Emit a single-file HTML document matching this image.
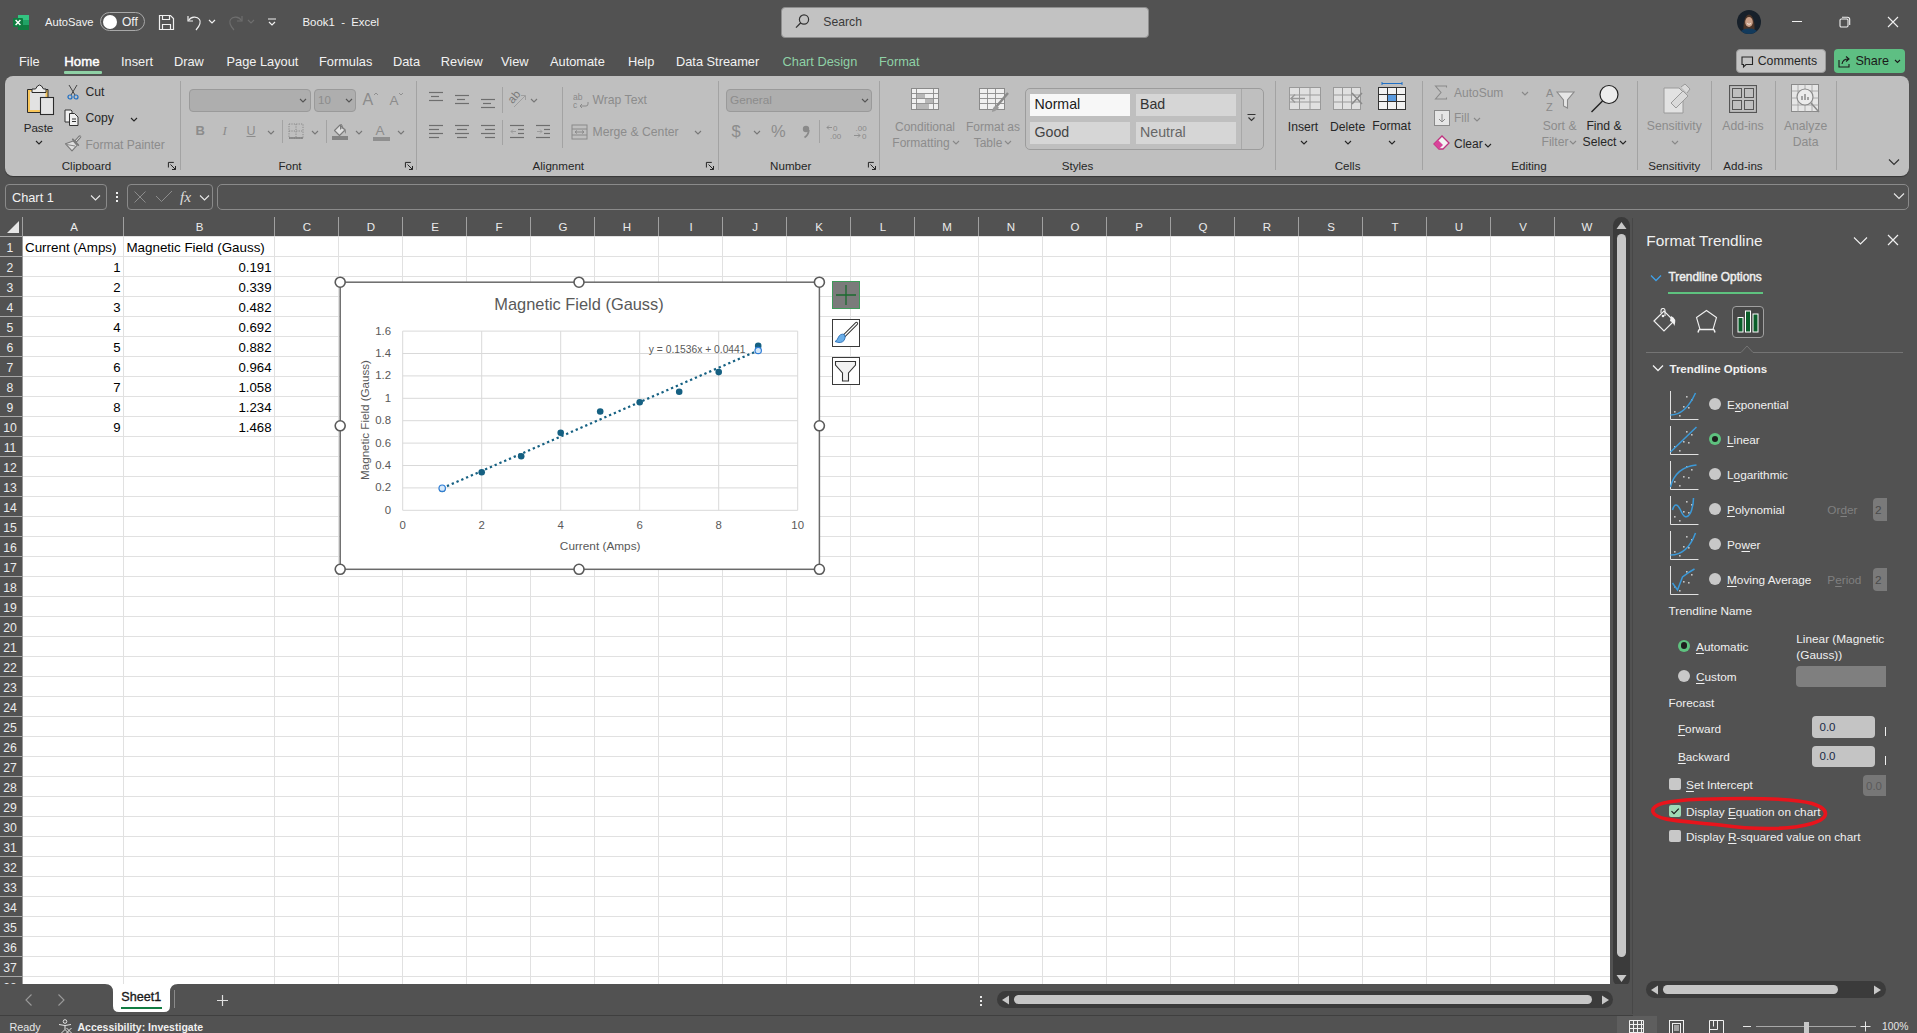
<!DOCTYPE html><html><head><meta charset="utf-8"><style>
*{margin:0;padding:0;box-sizing:border-box}
html,body{width:1917px;height:1033px;overflow:hidden}
body{background:#525252;font-family:"Liberation Sans",sans-serif;position:relative}
.a{position:absolute}
.t{position:absolute;white-space:nowrap}
u{text-decoration-thickness:1px;text-underline-offset:1.5px}
</style></head><body>
<svg class="a" style="left:13px;top:14px;" width="17" height="17" viewBox="0 0 17 17"><rect x="5" y="1" width="11" height="15" rx="1.5" fill="#21a366"/><rect x="5" y="1" width="11" height="5" fill="#33c481"/><rect x="5" y="11" width="11" height="5" fill="#107c41"/><rect x="0" y="4" width="10" height="9" rx="1" fill="#107c41"/><path d="M2.6 6 L7.4 11 M7.4 6 L2.6 11" stroke="#fff" stroke-width="1.4"/></svg>
<div class="t" style="font-size:11.2px;color:#f2f2f2;line-height:15px;top:14.5px;left:45.0px;">AutoSave</div>
<div class="a" style="left:100px;top:12px;width:45px;height:19px;border:1px solid #a8a8a8;border-radius:10px;"></div>
<div class="a" style="left:103px;top:14.5px;width:14px;height:14px;background:#fff;border-radius:50%;"></div>
<div class="t" style="font-size:12px;color:#f2f2f2;line-height:16px;top:14.0px;left:122.0px;">Off</div>
<svg class="a" style="left:158px;top:14px;" width="17" height="17" viewBox="0 0 17 17"><path d="M1.5 1.5h11l3 3v11h-14z" fill="none" stroke="#f0f0f0" stroke-width="1.2"/><path d="M4.5 1.5v4h7v-4 M4.5 15.5v-5h8v5" fill="none" stroke="#f0f0f0" stroke-width="1.2"/></svg>
<svg class="a" style="left:186px;top:13px;" width="18" height="18" viewBox="0 0 18 18"><path d="M2 3v5h5" fill="none" stroke="#f0f0f0" stroke-width="1.2"/><path d="M2.5 7.5 C5 3.5 11 3 13.5 6.5 C15.5 9.5 13.5 13 10 17" fill="none" stroke="#f0f0f0" stroke-width="1.2"/></svg>
<svg class="a" style="left:208px;top:19px;" width="8" height="5" viewBox="0 0 8 5"><path d="M1 1l3 3 3-3" fill="none" stroke="#f0f0f0" stroke-width="1.2"/></svg>
<svg class="a" style="left:226px;top:13px;" width="18" height="18" viewBox="0 0 18 18"><path d="M16 3v5h-5" fill="none" stroke="#6e6e6e" stroke-width="1.2"/><path d="M15.5 7.5 C13 3.5 7 3 4.5 6.5 C2.5 9.5 4.5 13 8 17" fill="none" stroke="#6e6e6e" stroke-width="1.2"/></svg>
<svg class="a" style="left:247px;top:19px;" width="8" height="5" viewBox="0 0 8 5"><path d="M1 1l3 3 3-3" fill="none" stroke="#6e6e6e" stroke-width="1.2"/></svg>
<svg class="a" style="left:267px;top:17px;" width="10" height="10" viewBox="0 0 10 10"><path d="M1 2h8 M2 5l3 3 3-3" fill="none" stroke="#f0f0f0" stroke-width="1.2"/></svg>
<div class="t" style="font-size:11.4px;color:#f2f2f2;line-height:15px;top:15.0px;left:302.5px;">Book1&nbsp; - &nbsp;Excel</div>
<div class="a" style="left:781px;top:6.5px;width:368px;height:31.5px;background:#c2c2c2;border:1px solid #8e8e8e;border-radius:4px;"></div>
<svg class="a" style="left:794px;top:13px;" width="17" height="17" viewBox="0 0 17 17"><circle cx="10" cy="6.5" r="4.6" fill="none" stroke="#333" stroke-width="1.2"/><path d="M6.8 9.8 L2 14.6" stroke="#333" stroke-width="1.3"/></svg>
<div class="t" style="font-size:12.2px;color:#3a3a3a;line-height:17px;top:13.8px;left:823.3px;">Search</div>
<svg class="a" style="left:1737px;top:10px;" width="24" height="24" viewBox="0 0 24 24"><defs><clipPath id="avc"><circle cx="12" cy="12" r="12"/></clipPath></defs><g clip-path="url(#avc)"><rect width="24" height="24" fill="#17202a"/><path d="M6.5 21 Q6 6 12 4.5 Q18 6 17.5 21z" fill="#4a3428"/><ellipse cx="12" cy="12" rx="3.8" ry="5" fill="#caa088"/><path d="M10 13.5 Q12 15.2 14 13.5" stroke="#f2e6dc" stroke-width="1" fill="none"/><path d="M1 26 Q3 18.5 12 18.5 Q21 18.5 23 26z" fill="#123a5c"/></g></svg>
<div class="a" style="left:1792px;top:21px;width:10px;height:1.2px;background:#f0f0f0;"></div>
<svg class="a" style="left:1839px;top:16px;" width="12" height="12" viewBox="0 0 12 12"><rect x="1" y="3" width="8" height="8" rx="1.2" fill="none" stroke="#f0f0f0" stroke-width="1.1"/><path d="M3 1.2h5.5a2.2 2.2 0 0 1 2.2 2.2V9" fill="none" stroke="#f0f0f0" stroke-width="1.1"/></svg>
<svg class="a" style="left:1887px;top:16px;" width="12" height="12" viewBox="0 0 12 12"><path d="M1 1L11 11M11 1L1 11" stroke="#f0f0f0" stroke-width="1.1"/></svg>
<div class="t" style="font-size:12.8px;color:#f2f2f2;line-height:17px;top:53.1px;left:19.0px;">File</div>
<div class="t" style="font-size:13.2px;color:#ffffff;line-height:18px;top:52.6px;left:64.3px;-webkit-text-stroke:0.45px #fff;">Home</div>
<div class="t" style="font-size:12.8px;color:#f2f2f2;line-height:17px;top:53.1px;left:121.0px;">Insert</div>
<div class="t" style="font-size:12.8px;color:#f2f2f2;line-height:17px;top:53.1px;left:174.0px;">Draw</div>
<div class="t" style="font-size:12.8px;color:#f2f2f2;line-height:17px;top:53.1px;left:226.5px;">Page Layout</div>
<div class="t" style="font-size:12.8px;color:#f2f2f2;line-height:17px;top:53.1px;left:319.0px;">Formulas</div>
<div class="t" style="font-size:12.8px;color:#f2f2f2;line-height:17px;top:53.1px;left:393.0px;">Data</div>
<div class="t" style="font-size:12.8px;color:#f2f2f2;line-height:17px;top:53.1px;left:440.8px;">Review</div>
<div class="t" style="font-size:12.8px;color:#f2f2f2;line-height:17px;top:53.1px;left:501.0px;">View</div>
<div class="t" style="font-size:12.8px;color:#f2f2f2;line-height:17px;top:53.1px;left:550.0px;">Automate</div>
<div class="t" style="font-size:12.8px;color:#f2f2f2;line-height:17px;top:53.1px;left:628.0px;">Help</div>
<div class="t" style="font-size:12.8px;color:#f2f2f2;line-height:17px;top:53.1px;left:676.0px;">Data Streamer</div>
<div class="t" style="font-size:12.8px;color:#8fd1a6;line-height:17px;top:53.1px;left:782.6px;">Chart Design</div>
<div class="t" style="font-size:12.8px;color:#8fd1a6;line-height:17px;top:53.1px;left:879.0px;">Format</div>
<div class="a" style="left:64px;top:71px;width:37.5px;height:2.5px;background:#8fd1a6;border-radius:1px;"></div>
<div class="a" style="left:1736px;top:49px;width:89.5px;height:23.5px;background:#c4c4c4;border:1px solid #9c9c9c;border-radius:4px;"></div>
<svg class="a" style="left:1741px;top:56px;" width="13" height="13" viewBox="0 0 13 13"><path d="M1 1h10.5v7.5H5L2.5 11V8.5H1z" fill="none" stroke="#262626" stroke-width="1.1"/></svg>
<div class="t" style="font-size:12.3px;color:#262626;line-height:17px;top:53.0px;left:1757.7px;">Comments</div>
<div class="a" style="left:1834px;top:49px;width:71px;height:23.5px;background:#5ebf83;border-radius:4px;"></div>
<svg class="a" style="left:1838px;top:55px;" width="13" height="13" viewBox="0 0 13 13"><path d="M1 5v7h10V9" fill="none" stroke="#1a1a1a" stroke-width="1.1"/><path d="M4 9 Q5 4 10 4 M8 1.5l3 2.5-3 2.5" fill="none" stroke="#1a1a1a" stroke-width="1.1"/></svg>
<div class="t" style="font-size:12.6px;color:#1a1a1a;line-height:17px;top:53.0px;left:1855.4px;">Share</div>
<svg class="a" style="left:1894px;top:59px;" width="7" height="5" viewBox="0 0 7 5"><path d="M1 1l2.5 2.5L6 1" fill="none" stroke="#1a1a1a" stroke-width="1.1"/></svg>
<div class="a" style="left:5px;top:184px;width:102px;height:26px;border:1px solid #8a8a8a;border-radius:4px;"></div>
<div class="t" style="font-size:12.8px;color:#f2f2f2;line-height:17px;top:188.9px;left:11.9px;">Chart 1</div>
<svg class="a" style="left:90px;top:193.5px;" width="11" height="8" viewBox="0 0 11 8"><path d="M1 1.5l4.5 4.5 4.5-4.5" fill="none" stroke="#e8e8e8" stroke-width="1.1"/></svg>
<div class="a" style="left:116px;top:191.8px;width:2.2px;height:2.2px;background:#f0f0f0;"></div>
<div class="a" style="left:116px;top:196px;width:2.2px;height:2.2px;background:#f0f0f0;"></div>
<div class="a" style="left:116px;top:200.2px;width:2.2px;height:2.2px;background:#f0f0f0;"></div>
<div class="a" style="left:127px;top:184px;width:86px;height:26px;border:1px solid #8a8a8a;border-radius:4px;"></div>
<svg class="a" style="left:133px;top:190px;" width="14" height="14" viewBox="0 0 14 14"><path d="M1.5 1.5L12.5 12.5M12.5 1.5L1.5 12.5" stroke="#8c8c8c" stroke-width="1"/></svg>
<svg class="a" style="left:155px;top:190px;" width="18" height="13" viewBox="0 0 18 13"><path d="M1 6l5.5 5.5L17 1" fill="none" stroke="#8c8c8c" stroke-width="1"/></svg>
<div class="t" style="font-size:15.5px;color:#dcdcdc;line-height:21px;top:186.0px;left:180.0px;font-family:Liberation Serif,serif;font-style:italic;">fx</div>
<svg class="a" style="left:199px;top:193.5px;" width="11" height="8" viewBox="0 0 11 8"><path d="M1 1.5l4.5 4.5 4.5-4.5" fill="none" stroke="#e8e8e8" stroke-width="1.1"/></svg>
<div class="a" style="left:217px;top:184px;width:1692px;height:26px;border:1px solid #8a8a8a;border-radius:5px;"></div>
<svg class="a" style="left:1893px;top:191.5px;" width="12" height="8" viewBox="0 0 12 8"><path d="M1 1.5l5 5 5-5" fill="none" stroke="#e8e8e8" stroke-width="1.1"/></svg>
<div class="a" style="left:0px;top:217px;width:1611px;height:19px;background:#525252;"></div>
<svg class="a" style="left:6px;top:220px;" width="14" height="14" viewBox="0 0 14 14"><path d="M13 1V13H1z" fill="#e6e6e6"/></svg>
<div class="a" style="left:22px;top:217px;width:1px;height:19px;background:#a0a0a0;"></div>
<div class="t" style="font-size:11.5px;color:#ececec;line-height:16px;top:218.5px;left:-226.0px;width:600px;text-align:center;">A</div>
<div class="a" style="left:122.5px;top:217px;width:1px;height:19px;background:#a0a0a0;"></div>
<div class="t" style="font-size:11.5px;color:#ececec;line-height:16px;top:218.5px;left:-100.5px;width:600px;text-align:center;">B</div>
<div class="a" style="left:273.5px;top:217px;width:1px;height:19px;background:#a0a0a0;"></div>
<div class="t" style="font-size:11.5px;color:#ececec;line-height:16px;top:218.5px;left:7.0px;width:600px;text-align:center;">C</div>
<div class="a" style="left:337.5px;top:217px;width:1px;height:19px;background:#a0a0a0;"></div>
<div class="t" style="font-size:11.5px;color:#ececec;line-height:16px;top:218.5px;left:71.0px;width:600px;text-align:center;">D</div>
<div class="a" style="left:401.5px;top:217px;width:1px;height:19px;background:#a0a0a0;"></div>
<div class="t" style="font-size:11.5px;color:#ececec;line-height:16px;top:218.5px;left:135.0px;width:600px;text-align:center;">E</div>
<div class="a" style="left:465.5px;top:217px;width:1px;height:19px;background:#a0a0a0;"></div>
<div class="t" style="font-size:11.5px;color:#ececec;line-height:16px;top:218.5px;left:199.0px;width:600px;text-align:center;">F</div>
<div class="a" style="left:529.5px;top:217px;width:1px;height:19px;background:#a0a0a0;"></div>
<div class="t" style="font-size:11.5px;color:#ececec;line-height:16px;top:218.5px;left:263.0px;width:600px;text-align:center;">G</div>
<div class="a" style="left:593.5px;top:217px;width:1px;height:19px;background:#a0a0a0;"></div>
<div class="t" style="font-size:11.5px;color:#ececec;line-height:16px;top:218.5px;left:327.0px;width:600px;text-align:center;">H</div>
<div class="a" style="left:657.5px;top:217px;width:1px;height:19px;background:#a0a0a0;"></div>
<div class="t" style="font-size:11.5px;color:#ececec;line-height:16px;top:218.5px;left:391.0px;width:600px;text-align:center;">I</div>
<div class="a" style="left:721.5px;top:217px;width:1px;height:19px;background:#a0a0a0;"></div>
<div class="t" style="font-size:11.5px;color:#ececec;line-height:16px;top:218.5px;left:455.0px;width:600px;text-align:center;">J</div>
<div class="a" style="left:785.5px;top:217px;width:1px;height:19px;background:#a0a0a0;"></div>
<div class="t" style="font-size:11.5px;color:#ececec;line-height:16px;top:218.5px;left:519.0px;width:600px;text-align:center;">K</div>
<div class="a" style="left:849.5px;top:217px;width:1px;height:19px;background:#a0a0a0;"></div>
<div class="t" style="font-size:11.5px;color:#ececec;line-height:16px;top:218.5px;left:583.0px;width:600px;text-align:center;">L</div>
<div class="a" style="left:913.5px;top:217px;width:1px;height:19px;background:#a0a0a0;"></div>
<div class="t" style="font-size:11.5px;color:#ececec;line-height:16px;top:218.5px;left:647.0px;width:600px;text-align:center;">M</div>
<div class="a" style="left:977.5px;top:217px;width:1px;height:19px;background:#a0a0a0;"></div>
<div class="t" style="font-size:11.5px;color:#ececec;line-height:16px;top:218.5px;left:711.0px;width:600px;text-align:center;">N</div>
<div class="a" style="left:1041.5px;top:217px;width:1px;height:19px;background:#a0a0a0;"></div>
<div class="t" style="font-size:11.5px;color:#ececec;line-height:16px;top:218.5px;left:775.0px;width:600px;text-align:center;">O</div>
<div class="a" style="left:1105.5px;top:217px;width:1px;height:19px;background:#a0a0a0;"></div>
<div class="t" style="font-size:11.5px;color:#ececec;line-height:16px;top:218.5px;left:839.0px;width:600px;text-align:center;">P</div>
<div class="a" style="left:1169.5px;top:217px;width:1px;height:19px;background:#a0a0a0;"></div>
<div class="t" style="font-size:11.5px;color:#ececec;line-height:16px;top:218.5px;left:903.0px;width:600px;text-align:center;">Q</div>
<div class="a" style="left:1233.5px;top:217px;width:1px;height:19px;background:#a0a0a0;"></div>
<div class="t" style="font-size:11.5px;color:#ececec;line-height:16px;top:218.5px;left:967.0px;width:600px;text-align:center;">R</div>
<div class="a" style="left:1297.5px;top:217px;width:1px;height:19px;background:#a0a0a0;"></div>
<div class="t" style="font-size:11.5px;color:#ececec;line-height:16px;top:218.5px;left:1031.0px;width:600px;text-align:center;">S</div>
<div class="a" style="left:1361.5px;top:217px;width:1px;height:19px;background:#a0a0a0;"></div>
<div class="t" style="font-size:11.5px;color:#ececec;line-height:16px;top:218.5px;left:1095.0px;width:600px;text-align:center;">T</div>
<div class="a" style="left:1425.5px;top:217px;width:1px;height:19px;background:#a0a0a0;"></div>
<div class="t" style="font-size:11.5px;color:#ececec;line-height:16px;top:218.5px;left:1159.0px;width:600px;text-align:center;">U</div>
<div class="a" style="left:1489.5px;top:217px;width:1px;height:19px;background:#a0a0a0;"></div>
<div class="t" style="font-size:11.5px;color:#ececec;line-height:16px;top:218.5px;left:1223.0px;width:600px;text-align:center;">V</div>
<div class="a" style="left:1553.5px;top:217px;width:1px;height:19px;background:#a0a0a0;"></div>
<div class="t" style="font-size:11.5px;color:#ececec;line-height:16px;top:218.5px;left:1287.0px;width:600px;text-align:center;">W</div>
<div class="a" style="left:23px;top:236px;width:1587px;height:748px;background-color:#fff;background-image:linear-gradient(to bottom,transparent 0 19px,#e1e1e1 19px 20px);background-size:100% 20px;background-position:0 1px"></div>
<div class="a" style="left:275px;top:236px;width:1335px;height:748px;background-image:linear-gradient(to right,transparent 0 63px,#e1e1e1 63px 64px);background-size:64px 100%;"></div>
<div class="a" style="left:123px;top:236px;width:1px;height:748px;background:#e1e1e1;"></div>
<div class="a" style="left:274px;top:236px;width:1px;height:748px;background:#e1e1e1;"></div>
<div class="a" style="left:0px;top:236px;width:22px;height:748px;background:#525252;"></div>
<div class="a" style="left:22px;top:236px;width:1px;height:748px;background:#9a9a9a;"></div>
<div class="a" style="left:0px;top:236px;width:22px;height:1px;background:#a8a8a8;"></div>
<div class="a" style="left:0px;top:256px;width:22px;height:1px;background:#a8a8a8;"></div>
<div class="t" style="font-size:12.2px;color:#ececec;line-height:17px;top:239.5px;left:-290.0px;width:600px;text-align:center;">1</div>
<div class="a" style="left:0px;top:276px;width:22px;height:1px;background:#a8a8a8;"></div>
<div class="t" style="font-size:12.2px;color:#ececec;line-height:17px;top:259.5px;left:-290.0px;width:600px;text-align:center;">2</div>
<div class="a" style="left:0px;top:296px;width:22px;height:1px;background:#a8a8a8;"></div>
<div class="t" style="font-size:12.2px;color:#ececec;line-height:17px;top:279.5px;left:-290.0px;width:600px;text-align:center;">3</div>
<div class="a" style="left:0px;top:316px;width:22px;height:1px;background:#a8a8a8;"></div>
<div class="t" style="font-size:12.2px;color:#ececec;line-height:17px;top:299.5px;left:-290.0px;width:600px;text-align:center;">4</div>
<div class="a" style="left:0px;top:336px;width:22px;height:1px;background:#a8a8a8;"></div>
<div class="t" style="font-size:12.2px;color:#ececec;line-height:17px;top:319.5px;left:-290.0px;width:600px;text-align:center;">5</div>
<div class="a" style="left:0px;top:356px;width:22px;height:1px;background:#a8a8a8;"></div>
<div class="t" style="font-size:12.2px;color:#ececec;line-height:17px;top:339.5px;left:-290.0px;width:600px;text-align:center;">6</div>
<div class="a" style="left:0px;top:376px;width:22px;height:1px;background:#a8a8a8;"></div>
<div class="t" style="font-size:12.2px;color:#ececec;line-height:17px;top:359.5px;left:-290.0px;width:600px;text-align:center;">7</div>
<div class="a" style="left:0px;top:396px;width:22px;height:1px;background:#a8a8a8;"></div>
<div class="t" style="font-size:12.2px;color:#ececec;line-height:17px;top:379.5px;left:-290.0px;width:600px;text-align:center;">8</div>
<div class="a" style="left:0px;top:416px;width:22px;height:1px;background:#a8a8a8;"></div>
<div class="t" style="font-size:12.2px;color:#ececec;line-height:17px;top:399.5px;left:-290.0px;width:600px;text-align:center;">9</div>
<div class="a" style="left:0px;top:436px;width:22px;height:1px;background:#a8a8a8;"></div>
<div class="t" style="font-size:12.2px;color:#ececec;line-height:17px;top:419.5px;left:-290.0px;width:600px;text-align:center;">10</div>
<div class="a" style="left:0px;top:456px;width:22px;height:1px;background:#a8a8a8;"></div>
<div class="t" style="font-size:12.2px;color:#ececec;line-height:17px;top:439.5px;left:-290.0px;width:600px;text-align:center;">11</div>
<div class="a" style="left:0px;top:476px;width:22px;height:1px;background:#a8a8a8;"></div>
<div class="t" style="font-size:12.2px;color:#ececec;line-height:17px;top:459.5px;left:-290.0px;width:600px;text-align:center;">12</div>
<div class="a" style="left:0px;top:496px;width:22px;height:1px;background:#a8a8a8;"></div>
<div class="t" style="font-size:12.2px;color:#ececec;line-height:17px;top:479.5px;left:-290.0px;width:600px;text-align:center;">13</div>
<div class="a" style="left:0px;top:516px;width:22px;height:1px;background:#a8a8a8;"></div>
<div class="t" style="font-size:12.2px;color:#ececec;line-height:17px;top:499.5px;left:-290.0px;width:600px;text-align:center;">14</div>
<div class="a" style="left:0px;top:536px;width:22px;height:1px;background:#a8a8a8;"></div>
<div class="t" style="font-size:12.2px;color:#ececec;line-height:17px;top:519.5px;left:-290.0px;width:600px;text-align:center;">15</div>
<div class="a" style="left:0px;top:556px;width:22px;height:1px;background:#a8a8a8;"></div>
<div class="t" style="font-size:12.2px;color:#ececec;line-height:17px;top:539.5px;left:-290.0px;width:600px;text-align:center;">16</div>
<div class="a" style="left:0px;top:576px;width:22px;height:1px;background:#a8a8a8;"></div>
<div class="t" style="font-size:12.2px;color:#ececec;line-height:17px;top:559.5px;left:-290.0px;width:600px;text-align:center;">17</div>
<div class="a" style="left:0px;top:596px;width:22px;height:1px;background:#a8a8a8;"></div>
<div class="t" style="font-size:12.2px;color:#ececec;line-height:17px;top:579.5px;left:-290.0px;width:600px;text-align:center;">18</div>
<div class="a" style="left:0px;top:616px;width:22px;height:1px;background:#a8a8a8;"></div>
<div class="t" style="font-size:12.2px;color:#ececec;line-height:17px;top:599.5px;left:-290.0px;width:600px;text-align:center;">19</div>
<div class="a" style="left:0px;top:636px;width:22px;height:1px;background:#a8a8a8;"></div>
<div class="t" style="font-size:12.2px;color:#ececec;line-height:17px;top:619.5px;left:-290.0px;width:600px;text-align:center;">20</div>
<div class="a" style="left:0px;top:656px;width:22px;height:1px;background:#a8a8a8;"></div>
<div class="t" style="font-size:12.2px;color:#ececec;line-height:17px;top:639.5px;left:-290.0px;width:600px;text-align:center;">21</div>
<div class="a" style="left:0px;top:676px;width:22px;height:1px;background:#a8a8a8;"></div>
<div class="t" style="font-size:12.2px;color:#ececec;line-height:17px;top:659.5px;left:-290.0px;width:600px;text-align:center;">22</div>
<div class="a" style="left:0px;top:696px;width:22px;height:1px;background:#a8a8a8;"></div>
<div class="t" style="font-size:12.2px;color:#ececec;line-height:17px;top:679.5px;left:-290.0px;width:600px;text-align:center;">23</div>
<div class="a" style="left:0px;top:716px;width:22px;height:1px;background:#a8a8a8;"></div>
<div class="t" style="font-size:12.2px;color:#ececec;line-height:17px;top:699.5px;left:-290.0px;width:600px;text-align:center;">24</div>
<div class="a" style="left:0px;top:736px;width:22px;height:1px;background:#a8a8a8;"></div>
<div class="t" style="font-size:12.2px;color:#ececec;line-height:17px;top:719.5px;left:-290.0px;width:600px;text-align:center;">25</div>
<div class="a" style="left:0px;top:756px;width:22px;height:1px;background:#a8a8a8;"></div>
<div class="t" style="font-size:12.2px;color:#ececec;line-height:17px;top:739.5px;left:-290.0px;width:600px;text-align:center;">26</div>
<div class="a" style="left:0px;top:776px;width:22px;height:1px;background:#a8a8a8;"></div>
<div class="t" style="font-size:12.2px;color:#ececec;line-height:17px;top:759.5px;left:-290.0px;width:600px;text-align:center;">27</div>
<div class="a" style="left:0px;top:796px;width:22px;height:1px;background:#a8a8a8;"></div>
<div class="t" style="font-size:12.2px;color:#ececec;line-height:17px;top:779.5px;left:-290.0px;width:600px;text-align:center;">28</div>
<div class="a" style="left:0px;top:816px;width:22px;height:1px;background:#a8a8a8;"></div>
<div class="t" style="font-size:12.2px;color:#ececec;line-height:17px;top:799.5px;left:-290.0px;width:600px;text-align:center;">29</div>
<div class="a" style="left:0px;top:836px;width:22px;height:1px;background:#a8a8a8;"></div>
<div class="t" style="font-size:12.2px;color:#ececec;line-height:17px;top:819.5px;left:-290.0px;width:600px;text-align:center;">30</div>
<div class="a" style="left:0px;top:856px;width:22px;height:1px;background:#a8a8a8;"></div>
<div class="t" style="font-size:12.2px;color:#ececec;line-height:17px;top:839.5px;left:-290.0px;width:600px;text-align:center;">31</div>
<div class="a" style="left:0px;top:876px;width:22px;height:1px;background:#a8a8a8;"></div>
<div class="t" style="font-size:12.2px;color:#ececec;line-height:17px;top:859.5px;left:-290.0px;width:600px;text-align:center;">32</div>
<div class="a" style="left:0px;top:896px;width:22px;height:1px;background:#a8a8a8;"></div>
<div class="t" style="font-size:12.2px;color:#ececec;line-height:17px;top:879.5px;left:-290.0px;width:600px;text-align:center;">33</div>
<div class="a" style="left:0px;top:916px;width:22px;height:1px;background:#a8a8a8;"></div>
<div class="t" style="font-size:12.2px;color:#ececec;line-height:17px;top:899.5px;left:-290.0px;width:600px;text-align:center;">34</div>
<div class="a" style="left:0px;top:936px;width:22px;height:1px;background:#a8a8a8;"></div>
<div class="t" style="font-size:12.2px;color:#ececec;line-height:17px;top:919.5px;left:-290.0px;width:600px;text-align:center;">35</div>
<div class="a" style="left:0px;top:956px;width:22px;height:1px;background:#a8a8a8;"></div>
<div class="t" style="font-size:12.2px;color:#ececec;line-height:17px;top:939.5px;left:-290.0px;width:600px;text-align:center;">36</div>
<div class="a" style="left:0px;top:976px;width:22px;height:1px;background:#a8a8a8;"></div>
<div class="t" style="font-size:12.2px;color:#ececec;line-height:17px;top:959.5px;left:-290.0px;width:600px;text-align:center;">37</div>
<div class="t" style="font-size:12.2px;color:#ececec;line-height:17px;top:979.5px;left:-290.0px;width:600px;text-align:center;">38</div>
<div class="t" style="font-size:13.4px;color:#000;line-height:18px;top:238.5px;left:25.0px;">Current (Amps)</div>
<div class="t" style="font-size:13.4px;color:#000;line-height:18px;top:238.5px;left:126.4px;">Magnetic Field (Gauss)</div>
<div class="t" style="font-size:13.2px;color:#000;line-height:18px;top:258.5px;left:-479.5px;width:600px;text-align:right;">1</div>
<div class="t" style="font-size:13.2px;color:#000;line-height:18px;top:258.5px;left:-328.5px;width:600px;text-align:right;">0.191</div>
<div class="t" style="font-size:13.2px;color:#000;line-height:18px;top:278.5px;left:-479.5px;width:600px;text-align:right;">2</div>
<div class="t" style="font-size:13.2px;color:#000;line-height:18px;top:278.5px;left:-328.5px;width:600px;text-align:right;">0.339</div>
<div class="t" style="font-size:13.2px;color:#000;line-height:18px;top:298.5px;left:-479.5px;width:600px;text-align:right;">3</div>
<div class="t" style="font-size:13.2px;color:#000;line-height:18px;top:298.5px;left:-328.5px;width:600px;text-align:right;">0.482</div>
<div class="t" style="font-size:13.2px;color:#000;line-height:18px;top:318.5px;left:-479.5px;width:600px;text-align:right;">4</div>
<div class="t" style="font-size:13.2px;color:#000;line-height:18px;top:318.5px;left:-328.5px;width:600px;text-align:right;">0.692</div>
<div class="t" style="font-size:13.2px;color:#000;line-height:18px;top:338.5px;left:-479.5px;width:600px;text-align:right;">5</div>
<div class="t" style="font-size:13.2px;color:#000;line-height:18px;top:338.5px;left:-328.5px;width:600px;text-align:right;">0.882</div>
<div class="t" style="font-size:13.2px;color:#000;line-height:18px;top:358.5px;left:-479.5px;width:600px;text-align:right;">6</div>
<div class="t" style="font-size:13.2px;color:#000;line-height:18px;top:358.5px;left:-328.5px;width:600px;text-align:right;">0.964</div>
<div class="t" style="font-size:13.2px;color:#000;line-height:18px;top:378.5px;left:-479.5px;width:600px;text-align:right;">7</div>
<div class="t" style="font-size:13.2px;color:#000;line-height:18px;top:378.5px;left:-328.5px;width:600px;text-align:right;">1.058</div>
<div class="t" style="font-size:13.2px;color:#000;line-height:18px;top:398.5px;left:-479.5px;width:600px;text-align:right;">8</div>
<div class="t" style="font-size:13.2px;color:#000;line-height:18px;top:398.5px;left:-328.5px;width:600px;text-align:right;">1.234</div>
<div class="t" style="font-size:13.2px;color:#000;line-height:18px;top:418.5px;left:-479.5px;width:600px;text-align:right;">9</div>
<div class="t" style="font-size:13.2px;color:#000;line-height:18px;top:418.5px;left:-328.5px;width:600px;text-align:right;">1.468</div>
<div class="a" style="left:1610px;top:211px;width:22px;height:805px;background:#525252;"></div>
<div class="a" style="left:1613px;top:217px;width:17px;height:770px;background:#3b3b3b;border-radius:8.5px;"></div>
<svg class="a" style="left:1616px;top:221px;" width="11" height="9" viewBox="0 0 11 9"><path d="M5.5 1L10.5 8H0.5z" fill="#c8c8c8"/></svg>
<div class="a" style="left:1617px;top:234px;width:9px;height:723px;background:#c6c6c6;border-radius:4.5px;"></div>
<svg class="a" style="left:1616px;top:974px;" width="11" height="9" viewBox="0 0 11 9"><path d="M5.5 8L10.5 1H0.5z" fill="#c8c8c8"/></svg>
<div class="a" style="left:1632px;top:218px;width:1px;height:796px;background:#474747;"></div>
<div class="a" style="left:0px;top:984px;width:1632px;height:31px;background:#525252;"></div>
<svg class="a" style="left:24px;top:993px;" width="9" height="14" viewBox="0 0 9 14"><path d="M7.5 1.5L2 7l5.5 5.5" fill="none" stroke="#9a9a9a" stroke-width="1.1"/></svg>
<svg class="a" style="left:57px;top:993px;" width="9" height="14" viewBox="0 0 9 14"><path d="M1.5 1.5L7 7l-5.5 5.5" fill="none" stroke="#9a9a9a" stroke-width="1.1"/></svg>
<svg class="a" style="left:105px;top:984px;" width="73" height="28" viewBox="0 0 73 28"><path d="M0 0 H73 Q65 0 65 8 V22 Q65 28 59 28 H14 Q8 28 8 22 V8 Q8 0 0 0z" fill="#fff"/></svg>
<div class="t" style="font-size:12.6px;color:#1a1a1a;line-height:17px;top:988.7px;left:121.3px;-webkit-text-stroke:0.35px #1a1a1a;">Sheet1</div>
<div class="a" style="left:121px;top:1007px;width:41px;height:2px;background:#107c41;"></div>
<div class="a" style="left:174px;top:990px;width:1px;height:18px;background:#8a8a8a;"></div>
<svg class="a" style="left:216px;top:994px;" width="13" height="13" viewBox="0 0 13 13"><path d="M6.5 1v11M1 6.5h11" stroke="#e0e0e0" stroke-width="1.2"/></svg>
<div class="a" style="left:980px;top:996px;width:2px;height:2px;background:#e8e8e8;"></div>
<div class="a" style="left:980px;top:1000px;width:2px;height:2px;background:#e8e8e8;"></div>
<div class="a" style="left:980px;top:1004px;width:2px;height:2px;background:#e8e8e8;"></div>
<div class="a" style="left:997px;top:991px;width:616px;height:17px;background:#3b3b3b;border-radius:8.5px;"></div>
<svg class="a" style="left:1001px;top:995px;" width="9" height="10" viewBox="0 0 9 10"><path d="M1 5L8 0.5V9.5z" fill="#c8c8c8"/></svg>
<div class="a" style="left:1014px;top:995px;width:578px;height:9px;background:#c6c6c6;border-radius:4.5px;"></div>
<svg class="a" style="left:1601px;top:995px;" width="9" height="10" viewBox="0 0 9 10"><path d="M8 5L1 0.5V9.5z" fill="#c8c8c8"/></svg>
<div class="a" style="left:0px;top:1015px;width:1917px;height:1px;background:#3f3f3f;"></div>
<div class="a" style="left:0px;top:1016px;width:1917px;height:17px;background:#525252;"></div>
<div class="t" style="font-size:10.8px;color:#e6e6e6;line-height:15px;top:1019.5px;left:9.4px;">Ready</div>
<svg class="a" style="left:58px;top:1019px;" width="15" height="14" viewBox="0 0 15 14"><circle cx="7" cy="2.5" r="1.8" fill="none" stroke="#e6e6e6" stroke-width="1"/><path d="M1 5.5Q7 7.5 13 5.5M7 6.5v4M7 10.5l-3.5 3.5M7 10.5l3.5 3.5M8.5 9l5 5M13.5 9l-5 5" fill="none" stroke="#e6e6e6" stroke-width="1"/></svg>
<div class="t" style="font-size:10.5px;color:#f0f0f0;line-height:14px;top:1020.0px;font-weight:bold;left:77.5px;">Accessibility: Investigate</div>
<div class="a" style="left:1617px;top:1016px;width:40px;height:17px;background:#5e5e5e;"></div>
<svg class="a" style="left:1629px;top:1020px;" width="15" height="13" viewBox="0 0 15 13"><path d="M0.5 0.5h14v13M0.5 0.5v13M0.5 4.5h14M0.5 8.5h14M0.5 12.5h14M4.5 0.5v13M8.5 0.5v13M12.5 0.5v13" fill="none" stroke="#f0f0f0" stroke-width="1"/></svg>
<svg class="a" style="left:1669px;top:1020px;" width="15" height="13" viewBox="0 0 15 13"><rect x="0.5" y="0.5" width="14" height="13" fill="none" stroke="#f0f0f0"/><rect x="3.5" y="3.5" width="8" height="10" fill="none" stroke="#f0f0f0"/><path d="M5 6h5M5 8h5M5 10h5" stroke="#f0f0f0"/></svg>
<svg class="a" style="left:1709px;top:1020px;" width="15" height="13" viewBox="0 0 15 13"><path d="M0.5 13V0.5h14V13M0.5 9.5h8V0.5M4.5 0.5v6" fill="none" stroke="#f0f0f0"/></svg>
<div class="a" style="left:1743px;top:1026px;width:8px;height:1px;background:#e6e6e6;"></div>
<div class="a" style="left:1756px;top:1026px;width:100px;height:1px;background:#a8a8a8;"></div>
<div class="a" style="left:1804px;top:1022px;width:5px;height:11px;background:#c8c8c8;"></div>
<svg class="a" style="left:1860px;top:1021px;" width="11" height="11" viewBox="0 0 11 11"><path d="M5.5 0.5v10M0.5 5.5h10" stroke="#e6e6e6" stroke-width="1"/></svg>
<div class="t" style="font-size:10.3px;color:#e6e6e6;line-height:14px;top:1019.6px;left:1882.0px;">100%</div>
<div class="a" style="left:5px;top:76px;width:1904px;height:100px;background:#bfbfbf;border-radius:8px;box-shadow:0 1px 1px rgba(0,0,0,0.35);"></div>
<svg class="a" style="left:20px;top:80px;" width="40" height="40" viewBox="20 80 40 40"><path d="M27.5 89.5h20.5v23H27.5z" fill="#f8c65a" stroke="#2b2b2b" stroke-width="1"/><rect x="30" y="91.5" width="15.5" height="18.5" fill="#e2e2e2"/><path d="M32 92.5V89h3.5Q37.5 85 39.5 85Q41.5 85 43.5 89H46v3.5z" fill="#ececec" stroke="#2b2b2b" stroke-width="1"/><rect x="40.5" y="97.5" width="13" height="17" fill="#e4e4e4" stroke="#2b2b2b" stroke-width="1.1"/></svg>
<div class="t" style="font-size:11.6px;color:#262626;line-height:16px;top:120.0px;left:-261.5px;width:600px;text-align:center;">Paste</div>
<svg class="a" style="left:35.0px;top:140px;" width="8" height="5" viewBox="0 0 8 5"><path d="M1 1l3 3 3-3" fill="none" stroke="#262626" stroke-width="1.1"/></svg>
<svg class="a" style="left:66px;top:84px;" width="14" height="16" viewBox="0 0 14 16"><path d="M3 1L9 11M11 1L5 11" stroke="#444" stroke-width="1"/><circle cx="4" cy="13" r="2" fill="none" stroke="#1f6fc4" stroke-width="1.2"/><circle cx="10" cy="13" r="2" fill="none" stroke="#1f6fc4" stroke-width="1.2"/></svg>
<div class="t" style="font-size:12.2px;color:#262626;line-height:17px;top:84.1px;left:85.4px;">Cut</div>
<svg class="a" style="left:64px;top:109px;" width="18" height="17" viewBox="0 0 18 17"><path d="M1 1h6l1 1v11H1z" fill="#f0f0f0" stroke="#333" stroke-width="1"/><path d="M5.5 4.5h5l3.5 3.5v8.5H5.5z" fill="#f0f0f0" stroke="#333" stroke-width="1"/><path d="M8 10h4M8 12.5h4" stroke="#333" stroke-width="1"/></svg>
<div class="t" style="font-size:12.2px;color:#262626;line-height:17px;top:110.1px;left:85.4px;">Copy</div>
<svg class="a" style="left:130.1px;top:116.5px;" width="8" height="5" viewBox="0 0 8 5"><path d="M1 1l3 3 3-3" fill="none" stroke="#262626" stroke-width="1.1"/></svg>
<svg class="a" style="left:60px;top:130px;" width="30" height="25" viewBox="60 130 30 25"><path d="M73.2 141L65.5 143.8 72 150.8 77 145.3z" fill="#dedede" stroke="#7a7a7a" stroke-width="1.1" stroke-linejoin="round"/><path d="M66.5 144.5L75 146" stroke="#7a7a7a" stroke-width="0.9"/><path d="M79.8 136.8L75.8 141.2" stroke="#7a7a7a" stroke-width="3" stroke-linecap="round"/><path d="M79.8 136.8L75.8 141.2" stroke="#e2e2e2" stroke-width="1" stroke-linecap="round"/><path d="M72.8 139.3L78.3 145" stroke="#7a7a7a" stroke-width="1.8" stroke-linecap="round"/></svg>
<div class="t" style="font-size:12px;color:#8c8c8c;line-height:16px;top:137.0px;left:85.4px;">Format Painter</div>
<div class="t" style="font-size:11.6px;color:#262626;line-height:16px;top:158.0px;left:-213.5px;width:600px;text-align:center;">Clipboard</div>
<svg class="a" style="left:167px;top:161px;" width="10" height="10" viewBox="0 0 10 10"><path d="M1.4 6.5V1.4H6.8" fill="none" stroke="#262626" stroke-width="1"/><path d="M3.5 3.5L8.5 8.5M8.5 5V8.5H5" fill="none" stroke="#262626" stroke-width="1"/></svg>
<div class="a" style="left:179.5px;top:81px;width:1px;height:89px;background:#a3a3a3;"></div>
<div class="a" style="left:188.5px;top:88.5px;width:122px;height:23px;background:#aeaeae;border:1px solid #9a9a9a;border-radius:4px;"></div>
<svg class="a" style="left:298.5px;top:98px;" width="8" height="5" viewBox="0 0 8 5"><path d="M1 1l3 3 3-3" fill="none" stroke="#555" stroke-width="1.1"/></svg>
<div class="a" style="left:314px;top:88.5px;width:41.5px;height:23px;background:#aeaeae;border:1px solid #9a9a9a;border-radius:4px;"></div>
<div class="t" style="font-size:11.5px;color:#8c8c8c;line-height:16px;top:92.0px;left:318.0px;">10</div>
<svg class="a" style="left:345.0px;top:98px;" width="8" height="5" viewBox="0 0 8 5"><path d="M1 1l3 3 3-3" fill="none" stroke="#555" stroke-width="1.1"/></svg>
<div class="t" style="font-size:16px;color:#8c8c8c;line-height:22px;top:88.5px;left:362.5px;">A</div>
<svg class="a" style="left:373px;top:92px;" width="6" height="4" viewBox="0 0 6 4"><path d="M1 3l2-2 2 2" fill="none" stroke="#8a8a8a" stroke-width="0.9"/></svg>
<div class="t" style="font-size:13.5px;color:#8c8c8c;line-height:18px;top:91.5px;left:389.5px;">A</div>
<svg class="a" style="left:398px;top:92px;" width="6" height="4" viewBox="0 0 6 4"><path d="M1 1l2 2 2-2" fill="none" stroke="#8a8a8a" stroke-width="0.9"/></svg>
<div class="t" style="font-size:13px;color:#8c8c8c;line-height:18px;top:122.3px;font-weight:bold;left:195.5px;">B</div>
<div class="t" style="font-size:13px;color:#8c8c8c;line-height:18px;top:122.3px;left:222.5px;font-style:italic;font-family:Liberation Serif,serif;">I</div>
<div class="t" style="font-size:12.5px;color:#8c8c8c;line-height:17px;top:122.5px;left:246.5px;text-decoration:underline;">U</div>
<svg class="a" style="left:267.1px;top:129.5px;" width="8" height="5" viewBox="0 0 8 5"><path d="M1 1l3 3 3-3" fill="none" stroke="#777" stroke-width="1.1"/></svg>
<div class="a" style="left:281.5px;top:120px;width:1px;height:23px;background:#a3a3a3;"></div>
<svg class="a" style="left:288px;top:123px;" width="16" height="16" viewBox="0 0 16 16"><rect x="1" y="1" width="14" height="14" fill="none" stroke="#8a8a8a" stroke-width="1" stroke-dasharray="1.2 1.2"/><path d="M8 1v14M1 8h14" stroke="#8a8a8a" stroke-dasharray="1.2 1.2"/><path d="M1 15h14" stroke="#7a7a7a" stroke-width="1.4"/></svg>
<svg class="a" style="left:310.9px;top:129.5px;" width="8" height="5" viewBox="0 0 8 5"><path d="M1 1l3 3 3-3" fill="none" stroke="#777" stroke-width="1.1"/></svg>
<div class="a" style="left:325.8px;top:120px;width:1px;height:23px;background:#a3a3a3;"></div>
<svg class="a" style="left:328px;top:118px;" width="24" height="24" viewBox="328 118 24 24"><path d="M334.5 130.5L340 125 345 130 339.5 135.5z" fill="#dedede" stroke="#7a7a7a" stroke-width="1.1" stroke-linejoin="round"/><path d="M340.5 129.5V125.5Q340.5 124 341.5 124.5Q342.5 125 342 129" fill="none" stroke="#7a7a7a" stroke-width="1"/><path d="M344.5 128Q347 131 345.5 134Q344 131 344.5 128z" fill="#8a8a8a"/><rect x="332" y="136" width="16" height="4" fill="#838383"/></svg>
<svg class="a" style="left:355.2px;top:129.5px;" width="8" height="5" viewBox="0 0 8 5"><path d="M1 1l3 3 3-3" fill="none" stroke="#777" stroke-width="1.1"/></svg>
<div class="t" style="font-size:13.5px;color:#8c8c8c;line-height:18px;top:121.5px;left:375.5px;">A</div>
<div class="a" style="left:372.5px;top:137px;width:17px;height:3.5px;background:#8f8f8f;"></div>
<svg class="a" style="left:396.5px;top:129.5px;" width="8" height="5" viewBox="0 0 8 5"><path d="M1 1l3 3 3-3" fill="none" stroke="#777" stroke-width="1.1"/></svg>
<svg class="a" style="left:404px;top:161px;" width="10" height="10" viewBox="0 0 10 10"><path d="M1.4 6.5V1.4H6.8" fill="none" stroke="#262626" stroke-width="1"/><path d="M3.5 3.5L8.5 8.5M8.5 5V8.5H5" fill="none" stroke="#262626" stroke-width="1"/></svg>
<div class="t" style="font-size:11.6px;color:#262626;line-height:16px;top:158.0px;left:-10.0px;width:600px;text-align:center;">Font</div>
<div class="a" style="left:415.5px;top:81px;width:1px;height:89px;background:#a3a3a3;"></div>
<svg class="a" style="left:420px;top:84px;" width="140" height="66" viewBox="420 84 140 66"><path d="M429 92.5H443" stroke="#6e6e6e" stroke-width="1.2"/><path d="M431 96.5H439" stroke="#6e6e6e" stroke-width="1.2"/><path d="M429 100.5H443" stroke="#6e6e6e" stroke-width="1.2"/><path d="M455 95.5H469" stroke="#6e6e6e" stroke-width="1.2"/><path d="M457 99.5H465" stroke="#6e6e6e" stroke-width="1.2"/><path d="M455 103.5H469" stroke="#6e6e6e" stroke-width="1.2"/><path d="M481 99.5H495" stroke="#6e6e6e" stroke-width="1.2"/><path d="M483 103.5H491" stroke="#6e6e6e" stroke-width="1.2"/><path d="M481 107.5H495" stroke="#6e6e6e" stroke-width="1.2"/><path d="M429 125.5H443" stroke="#6e6e6e" stroke-width="1.2"/><path d="M429 129.5H439" stroke="#6e6e6e" stroke-width="1.2"/><path d="M429 133.5H443" stroke="#6e6e6e" stroke-width="1.2"/><path d="M429 137.5H439" stroke="#6e6e6e" stroke-width="1.2"/><path d="M455 125.5H469" stroke="#6e6e6e" stroke-width="1.2"/><path d="M457 129.5H467" stroke="#6e6e6e" stroke-width="1.2"/><path d="M455 133.5H469" stroke="#6e6e6e" stroke-width="1.2"/><path d="M457 137.5H467" stroke="#6e6e6e" stroke-width="1.2"/><path d="M481 125.5H495" stroke="#6e6e6e" stroke-width="1.2"/><path d="M485 129.5H495" stroke="#6e6e6e" stroke-width="1.2"/><path d="M481 133.5H495" stroke="#6e6e6e" stroke-width="1.2"/><path d="M485 137.5H495" stroke="#6e6e6e" stroke-width="1.2"/><path d="M510 125.5H524" stroke="#6e6e6e" stroke-width="1.2"/><path d="M518 129.5H524" stroke="#6e6e6e" stroke-width="1.2"/><path d="M518 133.5H524" stroke="#6e6e6e" stroke-width="1.2"/><path d="M510 137.5H524" stroke="#6e6e6e" stroke-width="1.2"/><path d="M536 125.5H550" stroke="#6e6e6e" stroke-width="1.2"/><path d="M544 129.5H550" stroke="#6e6e6e" stroke-width="1.2"/><path d="M544 133.5H550" stroke="#6e6e6e" stroke-width="1.2"/><path d="M536 137.5H550" stroke="#6e6e6e" stroke-width="1.2"/><path d="M511 131.5h5M513 129.5l-2 2 2 2" fill="none" stroke="#9c9c9c" stroke-width="1"/><path d="M537 131.5h5M540 129.5l2 2-2 2" fill="none" stroke="#9c9c9c" stroke-width="1"/></svg>
<div class="a" style="left:502.4px;top:87px;width:1px;height:26px;background:#a3a3a3;"></div>
<svg class="a" style="left:502px;top:88px;" width="26" height="26" viewBox="0 0 26 26"><text x="13" y="15" text-anchor="middle" font-size="11.5" fill="#7a7a7a" font-family="Liberation Sans" transform="rotate(-50 10 11)">ab</text></svg>
<svg class="a" style="left:504px;top:83px;" width="26" height="26" viewBox="0 0 26 26"><path d="M10 24L21 13M17 12.5h4.5V17" fill="none" stroke="#9a9a9a" stroke-width="0.9"/></svg>
<svg class="a" style="left:529.5px;top:98px;" width="8" height="5" viewBox="0 0 8 5"><path d="M1 1l3 3 3-3" fill="none" stroke="#777" stroke-width="1.1"/></svg>
<div class="a" style="left:502.4px;top:120px;width:1px;height:25px;background:#a3a3a3;"></div>
<div class="a" style="left:561.5px;top:87px;width:1px;height:61px;background:#a3a3a3;"></div>
<svg class="a" style="left:573px;top:92px;" width="17" height="18" viewBox="0 0 17 18"><text x="0" y="8" font-size="8.5" fill="#8a8a8a" font-family="Liberation Sans">ab</text><text x="0" y="16" font-size="8.5" fill="#8a8a8a" font-family="Liberation Sans">c</text><path d="M15 10v2a2 2 0 0 1-2 2H7M9 12l-2 2 2 2" fill="none" stroke="#8a8a8a" stroke-width="1"/></svg>
<div class="t" style="font-size:12.2px;color:#8c8c8c;line-height:17px;top:92.1px;left:592.5px;">Wrap Text</div>
<svg class="a" style="left:571px;top:124px;" width="17" height="16" viewBox="0 0 17 16"><rect x="1" y="1" width="15" height="14" fill="none" stroke="#8a8a8a" stroke-width="1"/><path d="M1 5h15M1 11h15M4 8h9M6 6.5L4 8l2 1.5M11 6.5L13 8l-2 1.5" fill="none" stroke="#8a8a8a" stroke-width="1"/></svg>
<div class="t" style="font-size:12.2px;color:#8c8c8c;line-height:17px;top:123.5px;left:592.6px;">Merge &amp; Center</div>
<svg class="a" style="left:693.8px;top:129.5px;" width="8" height="5" viewBox="0 0 8 5"><path d="M1 1l3 3 3-3" fill="none" stroke="#777" stroke-width="1.1"/></svg>
<div class="t" style="font-size:11.6px;color:#262626;line-height:16px;top:158.0px;left:258.3px;width:600px;text-align:center;">Alignment</div>
<svg class="a" style="left:705px;top:161px;" width="10" height="10" viewBox="0 0 10 10"><path d="M1.4 6.5V1.4H6.8" fill="none" stroke="#262626" stroke-width="1"/><path d="M3.5 3.5L8.5 8.5M8.5 5V8.5H5" fill="none" stroke="#262626" stroke-width="1"/></svg>
<div class="a" style="left:717.7px;top:81px;width:1px;height:89px;background:#a3a3a3;"></div>
<div class="a" style="left:726px;top:88.5px;width:145.5px;height:23px;background:#aeaeae;border:1px solid #9a9a9a;border-radius:4px;"></div>
<div class="t" style="font-size:11.8px;color:#8c8c8c;line-height:16px;top:92.0px;left:730.0px;">General</div>
<svg class="a" style="left:861.0px;top:98px;" width="8" height="5" viewBox="0 0 8 5"><path d="M1 1l3 3 3-3" fill="none" stroke="#555" stroke-width="1.1"/></svg>
<div class="t" style="font-size:16.5px;color:#8c8c8c;line-height:23px;top:120.0px;left:731.5px;">$</div>
<svg class="a" style="left:752.9px;top:129.5px;" width="8" height="5" viewBox="0 0 8 5"><path d="M1 1l3 3 3-3" fill="none" stroke="#777" stroke-width="1.1"/></svg>
<div class="t" style="font-size:16.5px;color:#8c8c8c;line-height:23px;top:120.0px;left:771.0px;">%</div>
<svg class="a" style="left:801px;top:124px;" width="10" height="15" viewBox="0 0 10 15"><circle cx="5" cy="5" r="3.2" fill="#8a8a8a"/><path d="M7.8 6 Q7.5 11 3.5 13.5" fill="none" stroke="#8a8a8a" stroke-width="1.8"/></svg>
<div class="a" style="left:819.4px;top:120px;width:1px;height:23px;background:#a3a3a3;"></div>
<svg class="a" style="left:826px;top:123px;" width="17" height="17" viewBox="0 0 17 17"><text x="7" y="8" font-size="8" fill="#8a8a8a" font-family="Liberation Sans">0</text><text x="4" y="16" font-size="8" fill="#8a8a8a" font-family="Liberation Sans">.00</text><path d="M1 4.5h5M3 2.5L1 4.5 3 6.5" fill="none" stroke="#8a8a8a" stroke-width="0.9"/></svg>
<svg class="a" style="left:853px;top:123px;" width="17" height="17" viewBox="0 0 17 17"><text x="2.5" y="8" font-size="8" fill="#8a8a8a" font-family="Liberation Sans">.00</text><text x="9" y="16" font-size="8" fill="#8a8a8a" font-family="Liberation Sans">0</text><path d="M1 12.5h6M5 10.5l2 2-2 2" fill="none" stroke="#8a8a8a" stroke-width="0.9"/></svg>
<div class="t" style="font-size:11.6px;color:#262626;line-height:16px;top:158.0px;left:490.7px;width:600px;text-align:center;">Number</div>
<svg class="a" style="left:866.5px;top:161px;" width="10" height="10" viewBox="0 0 10 10"><path d="M1.4 6.5V1.4H6.8" fill="none" stroke="#262626" stroke-width="1"/><path d="M3.5 3.5L8.5 8.5M8.5 5V8.5H5" fill="none" stroke="#262626" stroke-width="1"/></svg>
<div class="a" style="left:879.4px;top:81px;width:1px;height:89px;background:#a3a3a3;"></div>
<svg class="a" style="left:911px;top:88px;" width="28" height="22" viewBox="0 0 28 22"><rect x="0.5" y="0.5" width="27" height="21" fill="#f0f0f0" stroke="#8a8a8a"/><path d="M0.5 5.5h27" stroke="#8a8a8a" stroke-width="0.9"/><path d="M0.5 10.5h27" stroke="#8a8a8a" stroke-width="0.9"/><path d="M0.5 15.5h27" stroke="#8a8a8a" stroke-width="0.9"/><path d="M5.5 0.5v21" stroke="#8a8a8a" stroke-width="0.9"/><path d="M22.5 0.5v21" stroke="#8a8a8a" stroke-width="0.9"/><rect x="6" y="6" width="8" height="4" fill="#b8b8b8"/><rect x="14" y="11" width="8" height="4" fill="#b8b8b8"/><rect x="6" y="16" width="12" height="5" fill="#b8b8b8"/></svg>
<div class="t" style="font-size:12px;color:#8c8c8c;line-height:16px;top:118.6px;left:625.0px;width:600px;text-align:center;">Conditional</div>
<div class="t" style="font-size:12px;color:#8c8c8c;line-height:16px;top:134.8px;left:621.0px;width:600px;text-align:center;">Formatting</div>
<svg class="a" style="left:952.0px;top:140px;" width="8" height="5" viewBox="0 0 8 5"><path d="M1 1l3 3 3-3" fill="none" stroke="#888" stroke-width="1.1"/></svg>
<svg class="a" style="left:979px;top:88px;" width="31" height="26" viewBox="0 0 31 26"><rect x="0.5" y="0.5" width="25" height="21" fill="#f0f0f0" stroke="#8a8a8a"/><path d="M0.5 5.5h25" stroke="#8a8a8a" stroke-width="0.9"/><path d="M0.5 10.5h25" stroke="#8a8a8a" stroke-width="0.9"/><path d="M0.5 15.5h25" stroke="#8a8a8a" stroke-width="0.9"/><path d="M8.5 0.5v21" stroke="#8a8a8a" stroke-width="0.9"/><path d="M16.5 0.5v21" stroke="#8a8a8a" stroke-width="0.9"/><path d="M29 5 L17 19" stroke="#8a8a8a" stroke-width="2.5"/><path d="M18 17 Q13 19 13 24 Q17 23 20 20z" fill="#9a9a9a"/></svg>
<div class="t" style="font-size:12px;color:#8c8c8c;line-height:16px;top:118.6px;left:693.0px;width:600px;text-align:center;">Format as</div>
<div class="t" style="font-size:12px;color:#8c8c8c;line-height:16px;top:134.8px;left:688.0px;width:600px;text-align:center;">Table</div>
<svg class="a" style="left:1004.0px;top:140px;" width="8" height="5" viewBox="0 0 8 5"><path d="M1 1l3 3 3-3" fill="none" stroke="#888" stroke-width="1.1"/></svg>
<div class="a" style="left:1025px;top:88px;width:239px;height:62px;border:1px solid #9c9c9c;border-radius:5px;"></div>
<div class="a" style="left:1240.5px;top:89px;width:1px;height:60px;background:#a8a8a8;"></div>
<div class="a" style="left:1030px;top:94px;width:100px;height:22px;background:#f7f7f7;"></div>
<div class="a" style="left:1135.8px;top:94px;width:100.5px;height:22px;background:#d6d6d6;"></div>
<div class="a" style="left:1030px;top:122px;width:100px;height:21.5px;background:#d6d6d6;"></div>
<div class="a" style="left:1135.8px;top:122px;width:100.5px;height:21.5px;background:#d6d6d6;"></div>
<div class="t" style="font-size:14.2px;color:#1a1a1a;line-height:19px;top:95.0px;left:1034.5px;">Normal</div>
<div class="t" style="font-size:14.2px;color:#333;line-height:19px;top:95.0px;left:1140.0px;">Bad</div>
<div class="t" style="font-size:14.2px;color:#444;line-height:19px;top:123.0px;left:1034.5px;">Good</div>
<div class="t" style="font-size:14.2px;color:#666;line-height:19px;top:123.0px;left:1140.0px;">Neutral</div>
<svg class="a" style="left:1246px;top:113px;" width="11" height="10" viewBox="0 0 11 10"><path d="M1.5 1.5h8M2.5 4.5l3 3 3-3" fill="none" stroke="#333" stroke-width="1.1"/></svg>
<div class="t" style="font-size:11.6px;color:#262626;line-height:16px;top:158.0px;left:777.5px;width:600px;text-align:center;">Styles</div>
<div class="a" style="left:1275px;top:81px;width:1px;height:89px;background:#a3a3a3;"></div>
<svg class="a" style="left:1288.5px;top:87px;" width="32" height="23" viewBox="0 0 32 23"><rect x="0.5" y="0.5" width="31" height="22" fill="#e0e0e0" stroke="#9a9a9a"/><path d="M0.5 8h31M0.5 15h31M10.5 0.5v22M21 0.5v22" stroke="#9a9a9a"/><path d="M2 11.5h14M6 7.5l-4 4 4 4" fill="none" stroke="#9a9a9a" stroke-width="1.5"/></svg>
<div class="t" style="font-size:12.2px;color:#262626;line-height:17px;top:119.2px;left:1003.0px;width:600px;text-align:center;">Insert</div>
<svg class="a" style="left:1299.5px;top:140px;" width="8" height="5" viewBox="0 0 8 5"><path d="M1 1l3 3 3-3" fill="none" stroke="#262626" stroke-width="1.1"/></svg>
<svg class="a" style="left:1333px;top:87px;" width="31" height="23" viewBox="0 0 31 23"><rect x="0.5" y="0.5" width="27" height="22" fill="#e0e0e0" stroke="#9a9a9a"/><path d="M0.5 8h27M0.5 15h27M9.5 0.5v22M18.5 0.5v22" stroke="#9a9a9a"/><path d="M19 6L29 17M29 6L19 17" stroke="#8a8a8a" stroke-width="1.5"/></svg>
<div class="t" style="font-size:12.2px;color:#262626;line-height:17px;top:119.2px;left:1047.6px;width:600px;text-align:center;">Delete</div>
<svg class="a" style="left:1344.1px;top:140px;" width="8" height="5" viewBox="0 0 8 5"><path d="M1 1l3 3 3-3" fill="none" stroke="#262626" stroke-width="1.1"/></svg>
<svg class="a" style="left:1378px;top:82px;" width="28" height="28" viewBox="0 0 28 28"><path d="M4 1.5h20M4 0v3M24 0v3" stroke="#1f6fc4" stroke-width="1"/><rect x="0.5" y="5.5" width="27" height="22" fill="#f2f2f2" stroke="#333"/><rect x="9.5" y="12.5" width="9" height="7" fill="#5a9be0"/><path d="M0.5 12.5h27M0.5 19.5h27M9.5 5.5v22M18.5 5.5v22" stroke="#333"/><rect x="0.5" y="5.5" width="27" height="22" fill="none" stroke="#333"/></svg>
<div class="t" style="font-size:12.2px;color:#262626;line-height:17px;top:118.4px;left:1091.5px;width:600px;text-align:center;">Format</div>
<svg class="a" style="left:1388.0px;top:140px;" width="8" height="5" viewBox="0 0 8 5"><path d="M1 1l3 3 3-3" fill="none" stroke="#262626" stroke-width="1.1"/></svg>
<div class="t" style="font-size:11.6px;color:#262626;line-height:16px;top:158.0px;left:1047.6px;width:600px;text-align:center;">Cells</div>
<div class="a" style="left:1421.9px;top:81px;width:1px;height:89px;background:#a3a3a3;"></div>
<svg class="a" style="left:1434px;top:85px;" width="14" height="15" viewBox="0 0 14 15"><path d="M12.5 2.5V1H1.5l5.5 6.5-5.5 6.5h11v-1.5" fill="none" stroke="#8a8a8a" stroke-width="1.1"/></svg>
<div class="t" style="font-size:12px;color:#8c8c8c;line-height:16px;top:85.0px;left:1454.0px;">AutoSum</div>
<svg class="a" style="left:1521.3px;top:90.5px;" width="8" height="5" viewBox="0 0 8 5"><path d="M1 1l3 3 3-3" fill="none" stroke="#888" stroke-width="1.1"/></svg>
<svg class="a" style="left:1434px;top:110px;" width="16" height="16" viewBox="0 0 16 16"><rect x="0.5" y="0.5" width="15" height="15" fill="#e6e6e6" stroke="#8a8a8a"/><path d="M8 4v8M5 9l3 3 3-3" fill="none" stroke="#8a8a8a" stroke-width="1"/></svg>
<div class="t" style="font-size:12px;color:#8c8c8c;line-height:16px;top:110.0px;left:1454.0px;">Fill</div>
<svg class="a" style="left:1472.5px;top:116.5px;" width="8" height="5" viewBox="0 0 8 5"><path d="M1 1l3 3 3-3" fill="none" stroke="#888" stroke-width="1.1"/></svg>
<svg class="a" style="left:1433px;top:135px;" width="17" height="15" viewBox="0 0 17 15"><path d="M1 9L9 1l7 7-6 6H6z" fill="#f2f2f2" stroke="#c0317f" stroke-width="1.3"/><path d="M1 9l5 5 4-4-5-5z" fill="#d8449a"/></svg>
<div class="t" style="font-size:12px;color:#262626;line-height:16px;top:136.0px;left:1454.0px;">Clear</div>
<svg class="a" style="left:1484.2px;top:142.5px;" width="8" height="5" viewBox="0 0 8 5"><path d="M1 1l3 3 3-3" fill="none" stroke="#262626" stroke-width="1.1"/></svg>
<svg class="a" style="left:1545px;top:86px;" width="30" height="27" viewBox="0 0 30 27"><text x="1" y="11" font-size="11" fill="#8a8a8a" font-family="Liberation Sans">A</text><text x="1" y="25" font-size="11" fill="#8a8a8a" font-family="Liberation Sans">Z</text><path d="M12 6h17l-6.5 8v8l-4-2v-6z" fill="#e6e6e6" stroke="#8a8a8a" stroke-width="1.1"/></svg>
<div class="t" style="font-size:12.2px;color:#8c8c8c;line-height:17px;top:118.4px;left:1259.6px;width:600px;text-align:center;">Sort &amp;</div>
<div class="t" style="font-size:12.2px;color:#8c8c8c;line-height:17px;top:134.3px;left:1255.0px;width:600px;text-align:center;">Filter</div>
<svg class="a" style="left:1568.5px;top:140px;" width="8" height="5" viewBox="0 0 8 5"><path d="M1 1l3 3 3-3" fill="none" stroke="#888" stroke-width="1.1"/></svg>
<svg class="a" style="left:1590px;top:84px;" width="30" height="30" viewBox="0 0 30 30"><circle cx="19" cy="10.5" r="9" fill="#ececec" stroke="#222" stroke-width="1.2"/><path d="M12.5 17L1.5 28" stroke="#222" stroke-width="1.4"/></svg>
<div class="t" style="font-size:12.2px;color:#262626;line-height:17px;top:118.4px;left:1304.0px;width:600px;text-align:center;">Find &amp;</div>
<div class="t" style="font-size:12.2px;color:#262626;line-height:17px;top:134.3px;left:1299.5px;width:600px;text-align:center;">Select</div>
<svg class="a" style="left:1618.5px;top:140px;" width="8" height="5" viewBox="0 0 8 5"><path d="M1 1l3 3 3-3" fill="none" stroke="#262626" stroke-width="1.1"/></svg>
<div class="t" style="font-size:11.6px;color:#262626;line-height:16px;top:158.0px;left:1229.0px;width:600px;text-align:center;">Editing</div>
<div class="a" style="left:1637px;top:81px;width:1px;height:89px;background:#a3a3a3;"></div>
<svg class="a" style="left:1663px;top:83px;" width="28" height="31" viewBox="0 0 28 31"><path d="M1 5h15l4 4v21H1z" fill="#e2e2e2" stroke="#9a9a9a"/><path d="M8 20L20 8l5 5-12 12z" fill="#dadada" stroke="#9a9a9a"/><path d="M18 4l4-3 5 5-3 4" fill="#dadada" stroke="#9a9a9a"/></svg>
<div class="t" style="font-size:12.2px;color:#8c8c8c;line-height:17px;top:118.4px;left:1374.3px;width:600px;text-align:center;">Sensitivity</div>
<svg class="a" style="left:1670.8px;top:140px;" width="8" height="5" viewBox="0 0 8 5"><path d="M1 1l3 3 3-3" fill="none" stroke="#888" stroke-width="1.1"/></svg>
<div class="t" style="font-size:11.6px;color:#262626;line-height:16px;top:158.0px;left:1374.3px;width:600px;text-align:center;">Sensitivity</div>
<div class="a" style="left:1711.4px;top:81px;width:1px;height:89px;background:#a3a3a3;"></div>
<svg class="a" style="left:1729px;top:85px;" width="28" height="28" viewBox="0 0 28 28"><rect x="0.5" y="0.5" width="27" height="27" fill="none" stroke="#555" stroke-width="1.2"/><rect x="3.5" y="3.5" width="9" height="9" fill="none" stroke="#555" stroke-width="1"/><rect x="15.5" y="3.5" width="9" height="9" fill="none" stroke="#555" stroke-width="1"/><rect x="3.5" y="15.5" width="9" height="9" fill="none" stroke="#555" stroke-width="1"/><rect x="15.5" y="15.5" width="9" height="9" fill="none" stroke="#555" stroke-width="1"/></svg>
<div class="t" style="font-size:12.2px;color:#8c8c8c;line-height:17px;top:118.4px;left:1443.0px;width:600px;text-align:center;">Add-ins</div>
<div class="t" style="font-size:11.6px;color:#262626;line-height:16px;top:158.0px;left:1443.0px;width:600px;text-align:center;">Add-ins</div>
<div class="a" style="left:1774.5px;top:81px;width:1px;height:89px;background:#a3a3a3;"></div>
<svg class="a" style="left:1791px;top:84px;" width="30" height="30" viewBox="0 0 30 30"><rect x="0.5" y="0.5" width="27" height="27" fill="#e6e6e6" stroke="#8a8a8a"/><path d="M0.5 7h27M0.5 14h27M0.5 21h27M7 0.5v27M14 0.5v27M21 0.5v27" stroke="#a0a0a0" stroke-width="0.8"/><circle cx="14" cy="13" r="8" fill="#ececec" stroke="#8a8a8a" stroke-width="1.2"/><path d="M11 16v-4M14 16v-6M17 16v-3" stroke="#8a8a8a" stroke-width="1.5"/><path d="M20 19l8 9" stroke="#8a8a8a" stroke-width="1.5"/></svg>
<div class="t" style="font-size:12.2px;color:#8c8c8c;line-height:17px;top:118.4px;left:1505.6px;width:600px;text-align:center;">Analyze</div>
<div class="t" style="font-size:12.2px;color:#8c8c8c;line-height:17px;top:134.3px;left:1505.6px;width:600px;text-align:center;">Data</div>
<div class="a" style="left:1836px;top:81px;width:1px;height:89px;background:#a3a3a3;"></div>
<svg class="a" style="left:1888px;top:158px;" width="12" height="8" viewBox="0 0 12 8"><path d="M1 1.5l5 5 5-5" fill="none" stroke="#333" stroke-width="1.2"/></svg>
<svg class="a" style="left:330px;top:270px;" width="540" height="310" viewBox="330 270 540 310"><rect x="340.2" y="282.2" width="479.2" height="287.1" fill="#fff" stroke="#6a6a6a" stroke-width="1.5"/><path d="M402.7 331.1V510.3" stroke="#d9d9d9" stroke-width="1"/><path d="M481.7 331.1V510.3" stroke="#d9d9d9" stroke-width="1"/><path d="M560.7 331.1V510.3" stroke="#d9d9d9" stroke-width="1"/><path d="M639.7 331.1V510.3" stroke="#d9d9d9" stroke-width="1"/><path d="M718.7 331.1V510.3" stroke="#d9d9d9" stroke-width="1"/><path d="M797.7 331.1V510.3" stroke="#d9d9d9" stroke-width="1"/><path d="M402.7 510.3H797.7" stroke="#d9d9d9" stroke-width="1"/><path d="M402.7 487.9H797.7" stroke="#d9d9d9" stroke-width="1"/><path d="M402.7 465.5H797.7" stroke="#d9d9d9" stroke-width="1"/><path d="M402.7 443.1H797.7" stroke="#d9d9d9" stroke-width="1"/><path d="M402.7 420.7H797.7" stroke="#d9d9d9" stroke-width="1"/><path d="M402.7 398.3H797.7" stroke="#d9d9d9" stroke-width="1"/><path d="M402.7 375.9H797.7" stroke="#d9d9d9" stroke-width="1"/><path d="M402.7 353.5H797.7" stroke="#d9d9d9" stroke-width="1"/><path d="M402.7 331.1H797.7" stroke="#d9d9d9" stroke-width="1"/><path d="M442.2 488.2L758.2 350.5" stroke="#156082" stroke-width="2.2" stroke-dasharray="2.3 2.9"/><circle cx="442.2" cy="488.9" r="3.3" fill="#156082"/><circle cx="481.7" cy="472.3" r="3.3" fill="#156082"/><circle cx="521.2" cy="456.3" r="3.3" fill="#156082"/><circle cx="560.7" cy="432.8" r="3.3" fill="#156082"/><circle cx="600.2" cy="411.5" r="3.3" fill="#156082"/><circle cx="639.7" cy="402.3" r="3.3" fill="#156082"/><circle cx="679.2" cy="391.8" r="3.3" fill="#156082"/><circle cx="718.7" cy="372.1" r="3.3" fill="#156082"/><circle cx="758.2" cy="345.9" r="3.3" fill="#156082"/><circle cx="442.2" cy="488.2" r="3.2" fill="#d6e8f8" stroke="#2f7ed8" stroke-width="1.2"/><circle cx="758.2" cy="350.5" r="3.2" fill="#d6e8f8" stroke="#2f7ed8" stroke-width="1.2"/><circle cx="340.2" cy="282.2" r="5" fill="#fff" stroke="#5a5a5a" stroke-width="1.6"/><circle cx="340.2" cy="425.8" r="5" fill="#fff" stroke="#5a5a5a" stroke-width="1.6"/><circle cx="340.2" cy="569.3" r="5" fill="#fff" stroke="#5a5a5a" stroke-width="1.6"/><circle cx="579.0" cy="282.2" r="5" fill="#fff" stroke="#5a5a5a" stroke-width="1.6"/><circle cx="579.0" cy="569.3" r="5" fill="#fff" stroke="#5a5a5a" stroke-width="1.6"/><circle cx="819.4" cy="282.2" r="5" fill="#fff" stroke="#5a5a5a" stroke-width="1.6"/><circle cx="819.4" cy="425.8" r="5" fill="#fff" stroke="#5a5a5a" stroke-width="1.6"/><circle cx="819.4" cy="569.3" r="5" fill="#fff" stroke="#5a5a5a" stroke-width="1.6"/></svg>
<div class="t" style="font-size:11.4px;color:#595959;line-height:15px;top:502.8px;left:-209.0px;width:600px;text-align:right;">0</div>
<div class="t" style="font-size:11.4px;color:#595959;line-height:15px;top:480.4px;left:-209.0px;width:600px;text-align:right;">0.2</div>
<div class="t" style="font-size:11.4px;color:#595959;line-height:15px;top:458.0px;left:-209.0px;width:600px;text-align:right;">0.4</div>
<div class="t" style="font-size:11.4px;color:#595959;line-height:15px;top:435.6px;left:-209.0px;width:600px;text-align:right;">0.6</div>
<div class="t" style="font-size:11.4px;color:#595959;line-height:15px;top:413.2px;left:-209.0px;width:600px;text-align:right;">0.8</div>
<div class="t" style="font-size:11.4px;color:#595959;line-height:15px;top:390.8px;left:-209.0px;width:600px;text-align:right;">1</div>
<div class="t" style="font-size:11.4px;color:#595959;line-height:15px;top:368.4px;left:-209.0px;width:600px;text-align:right;">1.2</div>
<div class="t" style="font-size:11.4px;color:#595959;line-height:15px;top:346.0px;left:-209.0px;width:600px;text-align:right;">1.4</div>
<div class="t" style="font-size:11.4px;color:#595959;line-height:15px;top:323.6px;left:-209.0px;width:600px;text-align:right;">1.6</div>
<div class="t" style="font-size:11.4px;color:#595959;line-height:15px;top:518.3px;left:102.7px;width:600px;text-align:center;">0</div>
<div class="t" style="font-size:11.4px;color:#595959;line-height:15px;top:518.3px;left:181.7px;width:600px;text-align:center;">2</div>
<div class="t" style="font-size:11.4px;color:#595959;line-height:15px;top:518.3px;left:260.7px;width:600px;text-align:center;">4</div>
<div class="t" style="font-size:11.4px;color:#595959;line-height:15px;top:518.3px;left:339.7px;width:600px;text-align:center;">6</div>
<div class="t" style="font-size:11.4px;color:#595959;line-height:15px;top:518.3px;left:418.7px;width:600px;text-align:center;">8</div>
<div class="t" style="font-size:11.4px;color:#595959;line-height:15px;top:518.3px;left:497.7px;width:600px;text-align:center;">10</div>
<div class="t" style="font-size:16.4px;color:#595959;line-height:22px;top:293.3px;left:279.0px;width:600px;text-align:center;">Magnetic Field (Gauss)</div>
<div class="t" style="font-size:11.8px;color:#595959;line-height:16px;top:537.7px;left:300.2px;width:600px;text-align:center;">Current (Amps)</div>
<div class="t" style="font-size:11.6px;color:#595959;line-height:14px;left:264.8px;top:413px;width:200px;text-align:center;transform:rotate(-90deg);">Magnetic Field (Gauss)</div>
<div class="t" style="font-size:10.3px;color:#595959;line-height:14px;top:343.0px;left:648.8px;">y = 0.1536x + 0.0441</div>
<div class="a" style="left:832px;top:281px;width:28px;height:28px;background:#7b7b7b;border:1px solid #3f9a5a;"></div>
<svg class="a" style="left:832px;top:281px;" width="28" height="28" viewBox="0 0 28 28"><path d="M14 4v20M4 14h20" stroke="#1b6b2f" stroke-width="1.3"/></svg>
<div class="a" style="left:832px;top:319px;width:28px;height:28px;background:#fff;border:1px solid #3a3a3a;"></div>
<svg class="a" style="left:832px;top:319px;" width="28" height="28" viewBox="0 0 28 28"><path d="M24.5 4.5 L12 17" stroke="#333" stroke-width="3.2" stroke-linecap="round"/><path d="M24.5 4.5 L12 17" stroke="#fff" stroke-width="1.4" stroke-linecap="round"/><path d="M12.5 15.5 Q8 14 6 19 Q5 22 3 22.5 Q9 25 12 21.5 Q14 19 12.5 15.5z" fill="#6aaee8" stroke="#2a6fb8" stroke-width="0.9"/></svg>
<div class="a" style="left:832px;top:357px;width:28px;height:28px;background:#fff;border:1px solid #3a3a3a;"></div>
<svg class="a" style="left:832px;top:357px;" width="28" height="28" viewBox="0 0 28 28"><path d="M3.5 4.5h20v3.5l-7 8v8h-6v-8l-7-8z" fill="#f2f2f2" stroke="#333" stroke-width="1.1"/></svg>
<div class="a" style="left:1633px;top:211px;width:284px;height:805px;background:#525252;"></div>
<div class="t" style="font-size:15.4px;color:#f0f0f0;line-height:21px;top:230.4px;left:1646.3px;">Format Trendline</div>
<svg class="a" style="left:1853px;top:236px;" width="15" height="9" viewBox="0 0 15 9"><path d="M1 1.5l6.5 6.5 6.5-6.5" fill="none" stroke="#f0f0f0" stroke-width="1.1"/></svg>
<svg class="a" style="left:1887px;top:234px;" width="12" height="12" viewBox="0 0 12 12"><path d="M1 1L11 11M11 1L1 11" stroke="#f0f0f0" stroke-width="1.2"/></svg>
<svg class="a" style="left:1650px;top:274px;" width="12" height="8" viewBox="0 0 12 8"><path d="M1 1.5l5 5 5-5" fill="none" stroke="#3fa0e8" stroke-width="1.3"/></svg>
<div class="t" style="font-size:11.9px;color:#f0f0f0;line-height:16px;top:269.3px;left:1668.4px;-webkit-text-stroke:0.45px #f0f0f0;">Trendline Options</div>
<div class="a" style="left:1668.4px;top:291.5px;width:95px;height:2.5px;background:#5ec27f;"></div>
<svg class="a" style="left:1652px;top:308px;" width="26" height="26" viewBox="0 0 26 26"><path d="M2 13L12 3l10 10-10 10z" fill="none" stroke="#f0f0f0" stroke-width="1.2"/><path d="M9 5V2.5a2 2 0 0 1 4 0V8" fill="none" stroke="#f0f0f0" stroke-width="1.1"/><circle cx="11" cy="8" r="1.3" fill="#f0f0f0"/><path d="M19 8 Q25 10 22.5 18 Q21 14 18 13z" fill="#f0f0f0"/></svg>
<svg class="a" style="left:1695px;top:309px;" width="23" height="25" viewBox="0 0 23 25"><path d="M11.5 1.5L21.5 8.5 18 20.5H5L1.5 8.5z" fill="none" stroke="#f0f0f0" stroke-width="1.1"/><path d="M4 20.5h15M4 20.5l-1 3M19 20.5l1 3" fill="none" stroke="#f0f0f0" stroke-width="1.5"/></svg>
<div class="a" style="left:1732px;top:306px;width:32px;height:32px;background:#474747;border:1px solid #a0a0a0;border-radius:4px;"></div>
<svg class="a" style="left:1737px;top:310px;" width="22" height="23" viewBox="0 0 22 23"><rect x="1" y="7.5" width="5" height="14.5" fill="#0b5e2a" stroke="#fff" stroke-width="1"/><rect x="8.5" y="1" width="5" height="21" fill="#0b5e2a" stroke="#fff" stroke-width="1"/><rect x="16" y="4" width="5" height="18" fill="#0b5e2a" stroke="#fff" stroke-width="1"/></svg>
<svg class="a" style="left:1646px;top:343px;" width="258" height="11" viewBox="0 0 258 11"><path d="M0 9.5H95L101 3l6 6.5H257" fill="none" stroke="#747474" stroke-width="1"/></svg>
<svg class="a" style="left:1652px;top:364px;" width="12" height="8" viewBox="0 0 12 8"><path d="M1 1.5l5 5 5-5" fill="none" stroke="#f0f0f0" stroke-width="1.3"/></svg>
<div class="t" style="font-size:11.5px;color:#f0f0f0;line-height:16px;top:360.7px;font-weight:bold;left:1669.5px;">Trendline Options</div>
<svg class="a" style="left:1669px;top:391px;" width="30" height="29" viewBox="0 0 30 29"><path d="M1.5 0v28.5h28" fill="none" stroke="#e0e0e0" stroke-width="1"/><rect x="5" y="20" width="1.6" height="1.6" fill="#c4c4c4"/><rect x="10" y="24" width="1.6" height="1.6" fill="#c4c4c4"/><rect x="14" y="15" width="1.6" height="1.6" fill="#c4c4c4"/><rect x="19" y="16" width="1.6" height="1.6" fill="#c4c4c4"/><rect x="22" y="8" width="1.6" height="1.6" fill="#c4c4c4"/><rect x="17" y="5" width="1.6" height="1.6" fill="#c4c4c4"/><path d="M1 24 Q16 24 26 2" transform="translate(0.5 0)" fill="none" stroke="#3c9ad9" stroke-width="1.5"/></svg>
<div class="a" style="left:1709px;top:397.8px;width:12px;height:12px;background:#c8c8c8;border-radius:50%;"></div>
<div class="t" style="font-size:11.8px;color:#f0f0f0;line-height:16px;top:397.0px;left:1727.0px;">E<u>x</u>ponential</div>
<svg class="a" style="left:1669px;top:426px;" width="30" height="29" viewBox="0 0 30 29"><path d="M1.5 0v28.5h28" fill="none" stroke="#e0e0e0" stroke-width="1"/><rect x="5" y="20" width="1.6" height="1.6" fill="#c4c4c4"/><rect x="10" y="24" width="1.6" height="1.6" fill="#c4c4c4"/><rect x="14" y="15" width="1.6" height="1.6" fill="#c4c4c4"/><rect x="19" y="16" width="1.6" height="1.6" fill="#c4c4c4"/><rect x="22" y="8" width="1.6" height="1.6" fill="#c4c4c4"/><rect x="17" y="5" width="1.6" height="1.6" fill="#c4c4c4"/><path d="M1 26 L27 1" transform="translate(0.5 0)" fill="none" stroke="#3c9ad9" stroke-width="1.5"/></svg>
<div class="a" style="left:1709px;top:432.8px;width:12px;height:12px;background:#5ec27f;border-radius:50%;"></div>
<div class="a" style="left:1711.8px;top:435.6px;width:6.4px;height:6.4px;background:#1e1e1e;border-radius:50%;"></div>
<div class="t" style="font-size:11.8px;color:#f0f0f0;line-height:16px;top:432.0px;left:1727.0px;"><u>L</u>inear</div>
<svg class="a" style="left:1669px;top:461px;" width="30" height="29" viewBox="0 0 30 29"><path d="M1.5 0v28.5h28" fill="none" stroke="#e0e0e0" stroke-width="1"/><rect x="5" y="20" width="1.6" height="1.6" fill="#c4c4c4"/><rect x="10" y="24" width="1.6" height="1.6" fill="#c4c4c4"/><rect x="14" y="15" width="1.6" height="1.6" fill="#c4c4c4"/><rect x="19" y="16" width="1.6" height="1.6" fill="#c4c4c4"/><rect x="22" y="8" width="1.6" height="1.6" fill="#c4c4c4"/><rect x="17" y="5" width="1.6" height="1.6" fill="#c4c4c4"/><path d="M1 26 Q6 6 27 4" transform="translate(0.5 0)" fill="none" stroke="#3c9ad9" stroke-width="1.5"/></svg>
<div class="a" style="left:1709px;top:467.8px;width:12px;height:12px;background:#c8c8c8;border-radius:50%;"></div>
<div class="t" style="font-size:11.8px;color:#f0f0f0;line-height:16px;top:467.0px;left:1727.0px;">L<u>o</u>garithmic</div>
<svg class="a" style="left:1669px;top:496px;" width="30" height="29" viewBox="0 0 30 29"><path d="M1.5 0v28.5h28" fill="none" stroke="#e0e0e0" stroke-width="1"/><rect x="5" y="20" width="1.6" height="1.6" fill="#c4c4c4"/><rect x="10" y="24" width="1.6" height="1.6" fill="#c4c4c4"/><rect x="14" y="15" width="1.6" height="1.6" fill="#c4c4c4"/><rect x="19" y="16" width="1.6" height="1.6" fill="#c4c4c4"/><rect x="22" y="8" width="1.6" height="1.6" fill="#c4c4c4"/><rect x="17" y="5" width="1.6" height="1.6" fill="#c4c4c4"/><path d="M3 14 Q6 4 11 14 Q16 26 21 17 Q24 10 24 2" transform="translate(0.5 0)" fill="none" stroke="#3c9ad9" stroke-width="1.5"/></svg>
<div class="a" style="left:1709px;top:502.8px;width:12px;height:12px;background:#c8c8c8;border-radius:50%;"></div>
<div class="t" style="font-size:11.8px;color:#f0f0f0;line-height:16px;top:502.0px;left:1727.0px;"><u>P</u>olynomial</div>
<svg class="a" style="left:1669px;top:531px;" width="30" height="29" viewBox="0 0 30 29"><path d="M1.5 0v28.5h28" fill="none" stroke="#e0e0e0" stroke-width="1"/><rect x="5" y="20" width="1.6" height="1.6" fill="#c4c4c4"/><rect x="10" y="24" width="1.6" height="1.6" fill="#c4c4c4"/><rect x="14" y="15" width="1.6" height="1.6" fill="#c4c4c4"/><rect x="19" y="16" width="1.6" height="1.6" fill="#c4c4c4"/><rect x="22" y="8" width="1.6" height="1.6" fill="#c4c4c4"/><rect x="17" y="5" width="1.6" height="1.6" fill="#c4c4c4"/><path d="M1 24 Q18 24 26 2" transform="translate(0.5 0)" fill="none" stroke="#3c9ad9" stroke-width="1.5"/></svg>
<div class="a" style="left:1709px;top:537.8px;width:12px;height:12px;background:#c8c8c8;border-radius:50%;"></div>
<div class="t" style="font-size:11.8px;color:#f0f0f0;line-height:16px;top:537.0px;left:1727.0px;">Po<u>w</u>er</div>
<svg class="a" style="left:1669px;top:566px;" width="30" height="29" viewBox="0 0 30 29"><path d="M1.5 0v28.5h28" fill="none" stroke="#e0e0e0" stroke-width="1"/><rect x="5" y="20" width="1.6" height="1.6" fill="#c4c4c4"/><rect x="10" y="24" width="1.6" height="1.6" fill="#c4c4c4"/><rect x="14" y="15" width="1.6" height="1.6" fill="#c4c4c4"/><rect x="19" y="16" width="1.6" height="1.6" fill="#c4c4c4"/><rect x="22" y="8" width="1.6" height="1.6" fill="#c4c4c4"/><rect x="17" y="5" width="1.6" height="1.6" fill="#c4c4c4"/><path d="M3 17 L8 24 L13 11 L20 6 L25 3" transform="translate(0.5 0)" fill="none" stroke="#3c9ad9" stroke-width="1.5"/></svg>
<div class="a" style="left:1709px;top:572.8px;width:12px;height:12px;background:#c8c8c8;border-radius:50%;"></div>
<div class="t" style="font-size:11.8px;color:#f0f0f0;line-height:16px;top:572.0px;left:1727.0px;"><u>M</u>oving Average</div>
<div class="t" style="font-size:11.8px;color:#808080;line-height:16px;top:501.5px;left:1827.3px;">Or<u>d</u>er</div>
<div class="a" style="left:1872.5px;top:498px;width:14px;height:22.5px;background:#7a7a7a;border-radius:4px 0 0 4px;"></div>
<div class="t" style="font-size:11.8px;color:#4a4a4a;line-height:16px;top:501.5px;left:1875.0px;">2</div>
<div class="t" style="font-size:11.8px;color:#808080;line-height:16px;top:571.5px;left:1827.3px;">P<u>e</u>riod</div>
<div class="a" style="left:1872.5px;top:568px;width:14px;height:22.5px;background:#7a7a7a;border-radius:4px 0 0 4px;"></div>
<div class="t" style="font-size:11.8px;color:#4a4a4a;line-height:16px;top:571.5px;left:1875.0px;">2</div>
<div class="t" style="font-size:11.8px;color:#f0f0f0;line-height:16px;top:603.0px;left:1668.5px;">Trendline Name</div>
<div class="a" style="left:1677.8px;top:639.6px;width:12px;height:12px;background:#5ec27f;border-radius:50%;"></div>
<div class="a" style="left:1680.6px;top:642.4px;width:6.4px;height:6.4px;background:#1e1e1e;border-radius:50%;"></div>
<div class="t" style="font-size:11.8px;color:#f0f0f0;line-height:16px;top:638.8px;left:1696.0px;"><u>A</u>utomatic</div>
<div class="t" style="font-size:11.8px;color:#f0f0f0;line-height:16px;top:631.0px;left:1796.3px;">Linear (Magnetic</div>
<div class="t" style="font-size:11.8px;color:#f0f0f0;line-height:16px;top:646.7px;left:1796.3px;">(Gauss))</div>
<div class="a" style="left:1677.8px;top:670px;width:12px;height:12px;background:#c8c8c8;border-radius:50%;"></div>
<div class="t" style="font-size:11.8px;color:#f0f0f0;line-height:16px;top:669.0px;left:1696.0px;"><u>C</u>ustom</div>
<div class="a" style="left:1796.3px;top:665.8px;width:90px;height:21.7px;background:#7f7f7f;border-radius:4px 0 0 4px;"></div>
<div class="t" style="font-size:11.8px;color:#f0f0f0;line-height:16px;top:694.8px;left:1668.5px;">Forecast</div>
<div class="t" style="font-size:11.8px;color:#f0f0f0;line-height:16px;top:720.8px;left:1677.9px;"><u>F</u>orward</div>
<div class="a" style="left:1812px;top:716.4px;width:62.6px;height:21.6px;background:#c4c4c4;border-radius:4px;"></div>
<div class="t" style="font-size:11.5px;color:#1a2a44;line-height:16px;top:718.5px;left:1819.5px;">0.0</div>
<div class="a" style="left:1885px;top:727px;width:1.3px;height:9px;background:#f0f0f0;"></div>
<div class="t" style="font-size:11.8px;color:#f0f0f0;line-height:16px;top:749.4px;left:1677.9px;"><u>B</u>ackward</div>
<div class="a" style="left:1812px;top:745.5px;width:62.6px;height:21.8px;background:#c4c4c4;border-radius:4px;"></div>
<div class="t" style="font-size:11.5px;color:#1a2a44;line-height:16px;top:747.5px;left:1819.5px;">0.0</div>
<div class="a" style="left:1885px;top:756px;width:1.3px;height:9px;background:#f0f0f0;"></div>
<div class="a" style="left:1668.5px;top:777.6px;width:12px;height:12px;background:#c8c8c8;border-radius:2px;"></div>
<div class="t" style="font-size:11.8px;color:#f0f0f0;line-height:16px;top:777.0px;left:1686.0px;"><u>S</u>et Intercept</div>
<div class="a" style="left:1862.7px;top:774.7px;width:23.3px;height:21.3px;background:#777;border-radius:4px 0 0 4px;"></div>
<div class="t" style="font-size:11.5px;color:#5a5a5a;line-height:16px;top:777.5px;left:1866.0px;">0.0</div>
<div class="a" style="left:1668.5px;top:804.8px;width:12px;height:12px;background:#9fd9b5;border-radius:2px;"></div>
<svg class="a" style="left:1668.5px;top:804.8px;" width="12" height="12" viewBox="0 0 12 12"><path d="M2.5 6.2l2.5 2.5 4.8-5" fill="none" stroke="#1a1a1a" stroke-width="1.2"/></svg>
<div class="t" style="font-size:11.8px;color:#f0f0f0;line-height:16px;top:804.2px;left:1686.0px;">Display <u>E</u>quation on chart</div>
<div class="a" style="left:1668.5px;top:830px;width:12px;height:12px;background:#c8c8c8;border-radius:2px;"></div>
<div class="t" style="font-size:11.8px;color:#f0f0f0;line-height:16px;top:828.9px;left:1686.0px;">Display <u>R</u>-squared value on chart</div>
<svg class="a" style="left:1645px;top:790px;" width="195" height="46" viewBox="1645 790 195 46"><path d="M1700 799.3C1755 797.5 1795 798.5 1812 803.5C1830 809 1830 818 1812 823.5C1790 830 1755 830 1720 825C1685 821 1656 821 1653 812C1651 804 1668 800.5 1700 799.3Z" fill="none" stroke="#e8141c" stroke-width="3.6"/></svg>
<div class="a" style="left:1646px;top:981px;width:240px;height:17px;background:#3b3b3b;border-radius:8.5px;"></div>
<svg class="a" style="left:1650px;top:985px;" width="9" height="10" viewBox="0 0 9 10"><path d="M1 5L8 0.5V9.5z" fill="#c8c8c8"/></svg>
<div class="a" style="left:1663px;top:985px;width:175px;height:9px;background:#c6c6c6;border-radius:4.5px;"></div>
<svg class="a" style="left:1873px;top:985px;" width="9" height="10" viewBox="0 0 9 10"><path d="M8 5L1 0.5V9.5z" fill="#c8c8c8"/></svg>
</body></html>
